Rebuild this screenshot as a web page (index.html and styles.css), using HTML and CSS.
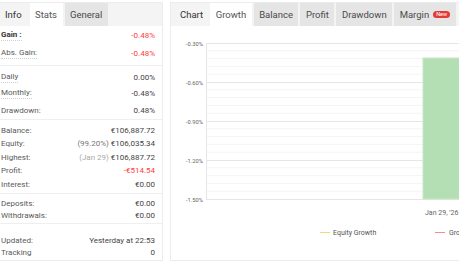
FILE: index.html
```html
<!DOCTYPE html>
<html lang="en">
<head>
    <meta charset="UTF-8">
    <title>Account Stats</title>
    <link rel="stylesheet" href="styles.css">
</head>
<body>
    <div class="layout">
        <div class="card stats-card">
            <div class="tab-bar">
                <span class="tab-title">Info</span>
                <span class="tab active">Stats</span>
                <span class="tab">General</span>
            </div>

            <div class="group group-gain">
                <div class="row"><span class="label strong dotted">Gain :</span><span class="value red">-0.48%</span></div>
                <div class="row"><span class="label dotted">Abs. Gain:</span><span class="value red">-0.48%</span></div>
            </div>
            <div class="group group-period">
                <div class="row"><span class="label dotted">Daily</span><span class="value">0.00%</span></div>
                <div class="row"><span class="label dotted">Monthly:</span><span class="value">-0.48%</span></div>
                <div class="row"><span class="label">Drawdown:</span><span class="value">0.48%</span></div>
            </div>
            <div class="group group-money">
                <div class="row"><span class="label">Balance:</span><span class="value">€106,887.72</span></div>
                <div class="row"><span class="label">Equity:</span><span class="value"><span class="muted">(99.20%)</span> €106,035.34</span></div>
                <div class="row"><span class="label">Highest:</span><span class="value"><span class="faint">(Jan 29)</span> €106,887.72</span></div>
                <div class="row"><span class="label">Profit:</span><span class="value red">-€514.54</span></div>
                <div class="row"><span class="label">Interest:</span><span class="value">€0.00</span></div>
            </div>
            <div class="group group-flow">
                <div class="row"><span class="label">Deposits:</span><span class="value">€0.00</span></div>
                <div class="row"><span class="label">Withdrawals:</span><span class="value">€0.00</span></div>
            </div>
            <div class="group group-update">
                <div class="row"><span class="label">Updated:</span><span class="value">Yesterday at 22:53</span></div>
                <div class="row"><span class="label">Tracking</span><span class="value">0</span></div>
            </div>
        </div>

        <div class="card chart-card">
            <div class="tab-bar">
                <span class="tab-title chart-title">Chart</span>
                <span class="tab active">Growth</span>
                <span class="tab">Balance</span>
                <span class="tab">Profit</span>
                <span class="tab">Drawdown</span>
                <span class="tab">Margin <span class="badge">New</span></span>
            </div>

            <svg class="chart" width="340" height="234" viewBox="0 0 340 234">
                <!-- minor grid -->
                <g class="grid-minor">
                    <line x1="35" x2="340" y1="24.8" y2="24.8"/>
                    <line x1="35" x2="340" y1="32.6" y2="32.6"/>
                    <line x1="35" x2="340" y1="40.4" y2="40.4"/>
                    <line x1="35" x2="340" y1="48.2" y2="48.2"/>
                    <line x1="35" x2="340" y1="63.8" y2="63.8"/>
                    <line x1="35" x2="340" y1="71.6" y2="71.6"/>
                    <line x1="35" x2="340" y1="79.4" y2="79.4"/>
                    <line x1="35" x2="340" y1="87.2" y2="87.2"/>
                    <line x1="35" x2="340" y1="102.8" y2="102.8"/>
                    <line x1="35" x2="340" y1="110.6" y2="110.6"/>
                    <line x1="35" x2="340" y1="118.4" y2="118.4"/>
                    <line x1="35" x2="340" y1="126.2" y2="126.2"/>
                    <line x1="35" x2="340" y1="141.8" y2="141.8"/>
                    <line x1="35" x2="340" y1="149.6" y2="149.6"/>
                    <line x1="35" x2="340" y1="157.4" y2="157.4"/>
                    <line x1="35" x2="340" y1="165.2" y2="165.2"/>
                </g>
                <!-- major grid -->
                <g class="grid-major">
                    <line x1="35" x2="340" y1="17.5" y2="17.5"/>
                    <line x1="35" x2="340" y1="56.5" y2="56.5"/>
                    <line x1="35" x2="340" y1="95.5" y2="95.5"/>
                    <line x1="35" x2="340" y1="134.5" y2="134.5"/>
                    <line x1="35" x2="340" y1="173.5" y2="173.5"/>
                    <line x1="35.5" x2="35.5" y1="17" y2="174"/>
                </g>
                <rect class="bar" x="252" y="32" width="90" height="141"/>
                <g class="axis-label">
                    <text x="32" y="19.5">-0.30%</text>
                    <text x="32" y="58.5">-0.60%</text>
                    <text x="32" y="97.5">-0.90%</text>
                    <text x="32" y="136.5">-1.20%</text>
                    <text x="32" y="175.5">-1.50%</text>
                </g>
                <text class="x-label" x="254" y="188.5">Jan 29, '26</text>
                <line class="legend-equity" x1="149" x2="159" y1="206.5" y2="206.5"/>
                <text class="legend-text" x="162" y="209">Equity Growth</text>
                <line class="legend-growth" x1="264" x2="274" y1="206.5" y2="206.5"/>
                <text class="legend-text" x="278" y="209">Growth</text>
            </svg>
        </div>
    </div>
</body>
</html>
```

FILE: styles.css
```css
* {
    margin: 0;
    padding: 0;
    box-sizing: border-box;
}

body {
    background-color: #fff;
    font-family: Roboto, "Liberation Sans", sans-serif;
    overflow: hidden;
    width: 459px;
    height: 262px;
}

.layout {
    display: flex;
    gap: 7px;
    padding-top: 2px;
    width: 560px;
}

.card {
    background-color: #fff;
    border: 1px solid #ececec;
}

.stats-card {
    width: 163px;
    flex: none;
    border-left: none;
    height: 259px;
}

.chart-card {
    width: 380px;
    flex: none;
    height: 259px;
    overflow: hidden;
}

.tab-bar {
    display: flex;
    gap: 2px;
    height: 23px;
    background-color: #f4f4f4;
    font-size: 9.5px;
    color: #444;
}

.tab-title {
    display: flex;
    align-items: center;
    padding: 0 8px 0 5px;
    color: #333;
    margin-right: -2px;
}

.chart-title {
    padding: 0 7px 0 9px;
}

.tab {
    display: flex;
    align-items: center;
    padding: 0 5.5px;
    background-color: #e5e5e5;
    color: #4a4a4a;
}

.tab.active {
    background-color: #fff;
    color: #555;
}

.badge {
    display: inline-block;
    margin-left: 4px;
    padding: 0 3px;
    background-color: #e53935;
    color: #fff;
    font-size: 5.5px;
    line-height: 7px;
    border-radius: 4px;
}

.group {
    border-bottom: 1px solid #efefef;
    font-size: 8px;
}

.group:last-child {
    border-bottom: none;
}

.row {
    display: flex;
    justify-content: space-between;
    align-items: center;
    padding: 0 7px 0 1px;
}

.group-gain {
    padding-bottom: 3px;
}

.group-gain .row {
    height: 18px;
}

.group-period {
    padding: 3px 0 0.5px;
}

.group-period .row {
    height: 16.5px;
}

.group-money {
    padding: 3.5px 0 2px;
}

.group-money .row {
    height: 13.5px;
}

.group-flow {
    padding: 3px 0 2px;
}

.group-flow .row {
    height: 12px;
}

.group-update {
    padding: 10px 0 1px;
    border-bottom: 1px solid #efefef;
}

.group-update .row {
    height: 12.5px;
}

.label {
    color: #5a5a5a;
}

.label.strong {
    font-weight: bold;
    color: #333;
}

.label.dotted {
    border-bottom: 1px dotted #d0d0d0;
    line-height: 10px;
}

.value {
    color: #444;
}

.value.red {
    color: #ff3b3b;
}

.muted {
    color: #777;
}

.faint {
    color: #aaa;
}

.chart {
    display: block;
    font-family: Roboto, "Liberation Sans", sans-serif;
}

.grid-minor line {
    stroke: #f4f4f4;
    stroke-width: 1;
}

.grid-major line {
    stroke: #e6e6e6;
    stroke-width: 1;
}

.bar {
    fill: #b4deb3;
    stroke: #c8e8c6;
    stroke-width: 1;
}

.axis-label text {
    font-size: 5.8px;
    fill: #666;
    text-anchor: end;
}

.x-label {
    font-size: 7px;
    fill: #666;
}

.legend-text {
    font-size: 7px;
    fill: #555;
}

.legend-equity {
    stroke: #f7d77a;
    stroke-width: 1;
}

.legend-growth {
    stroke: #ef8f8f;
    stroke-width: 1;
}
```
